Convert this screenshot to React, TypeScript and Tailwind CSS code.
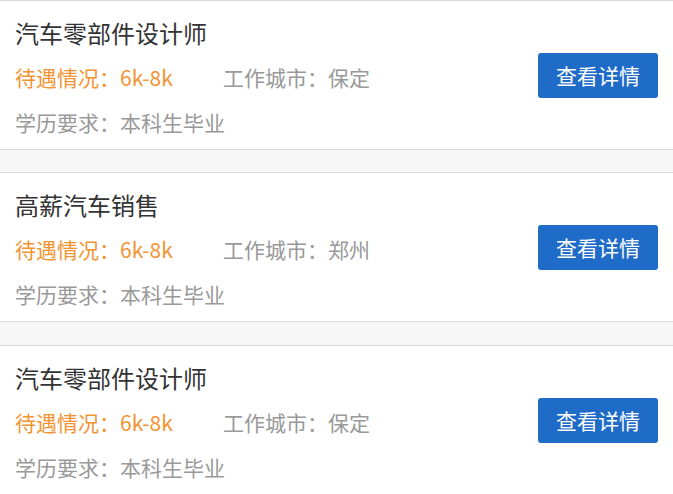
const jobs = [
  { title: '汽车零部件设计师', salary: '6k-8k', city: '保定', edu: '本科生毕业' },
  { title: '高薪汽车销售', salary: '6k-8k', city: '郑州', edu: '本科生毕业' },
  { title: '汽车零部件设计师', salary: '6k-8k', city: '保定', edu: '本科生毕业' },
];

export default function App() {
  return (
    <div
      className="w-[673px] h-[494px] overflow-hidden bg-[#f7f7f7]"
      style={{ fontFamily: '"Noto Sans CJK SC", "Noto Sans", sans-serif' }}
    >
      {jobs.map((job, idx) => (
        <div key={idx} className={idx === 1 ? 'mt-[22px]' : idx === 2 ? 'mt-[23px]' : ''}>
          <div className="bg-white border-y border-[#d9d9d9] h-[150px] flex items-center pl-[15px] pr-[15px]">
            <div className="flex-1 pt-[9px] pb-[4px]">
              <div className="h-[45px] leading-[45px] text-[24px] text-[#333333]">{job.title}</div>
              <div className="h-[45px] leading-[45px] text-[21px] flex">
                <span className="text-[#f29433] w-[208px]">待遇情况：{job.salary}</span>
                <span className="text-[#999999]">工作城市：{job.city}</span>
              </div>
              <div className="h-[45px] leading-[45px] text-[21px] text-[#999999]">学历要求：{job.edu}</div>
            </div>
            <button className="w-[120px] h-[45px] rounded-[3px] bg-[#1f6bc8] text-white text-[21px] leading-[45px]">
              查看详情
            </button>
          </div>
        </div>
      ))}
    </div>
  );
}
